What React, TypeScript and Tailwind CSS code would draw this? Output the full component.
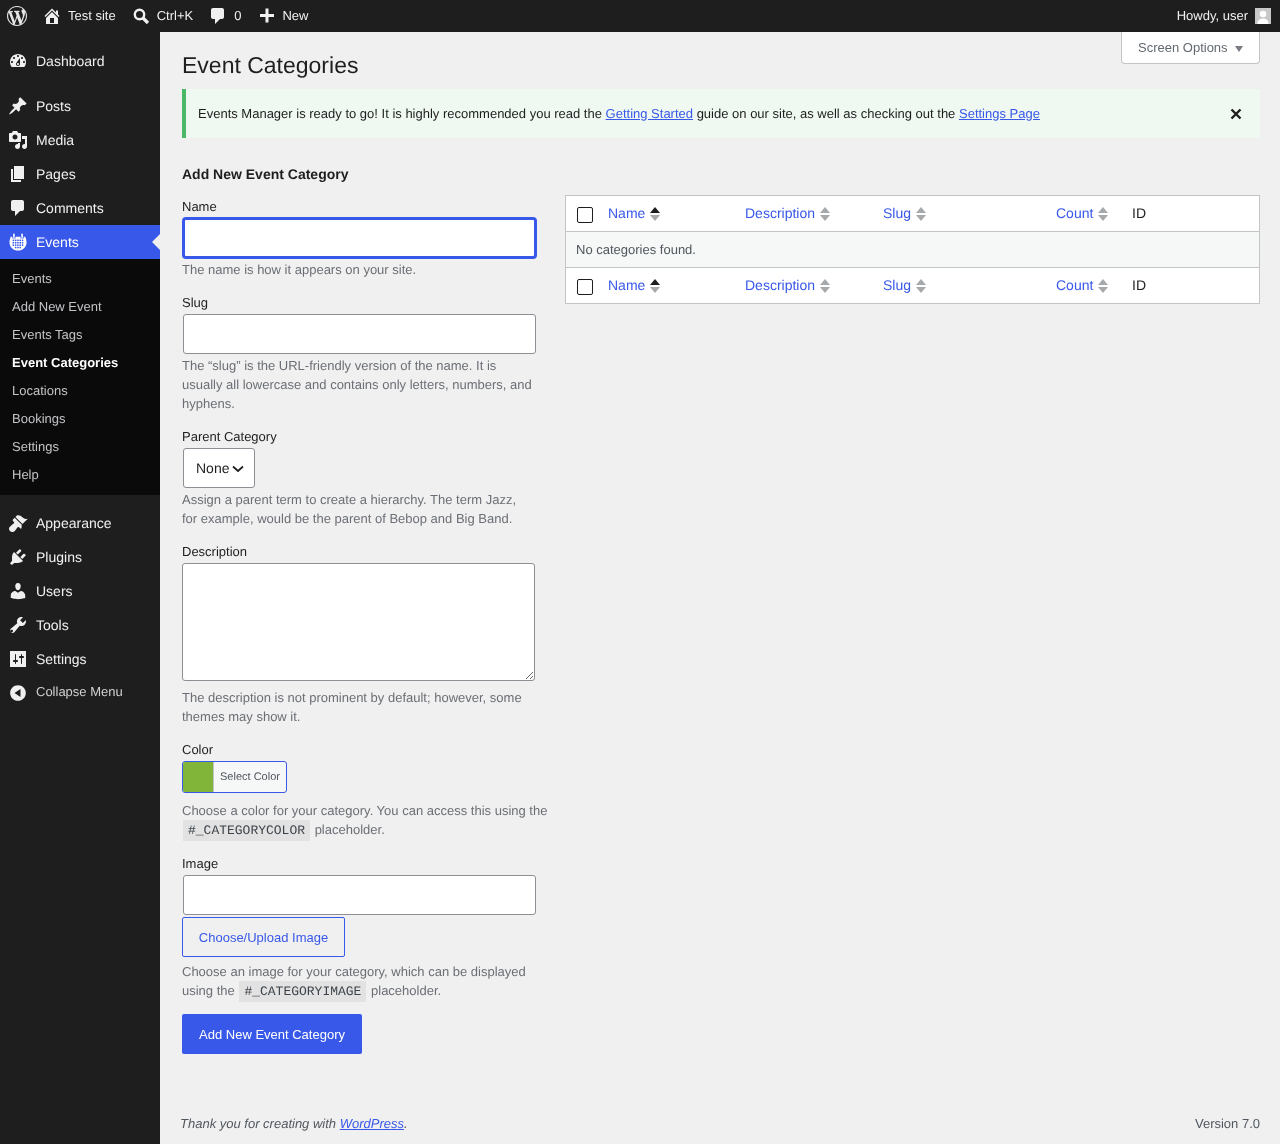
import React from "react";

const paths: Record<string, string> = {
  wp: "M20 10c0-5.510-4.490-10-10-10C4.480 0 0 4.490 0 10c0 5.520 4.480 10 10 10 5.510 0 10-4.480 10-10zM7.780 15.370L4.370 6.220c.55-.02 1.170-.08 1.170-.08.5-.06.44-1.130-.06-1.110 0 0-1.450.11-2.370.11-.18 0-.37 0-.58-.01C4.120 2.690 6.870 1.110 10 1.110c2.330 0 4.450.87 6.050 2.340-.68-.11-1.650.39-1.650 1.580 0 .74.45 1.360.9 2.100.35.61.55 1.360.55 2.460 0 1.490-1.400 5-1.400 5l-3.030-8.370c.54-.02.82-.17.82-.17.5-.05.44-1.250-.06-1.220 0 0-1.440.12-2.380.12-.87 0-2.330-.12-2.330-.12-.5-.03-.56 1.200-.06 1.220l.92.08 1.260 3.410zM17.410 10c.24-.64.74-1.870.43-4.250.7 1.290 1.050 2.710 1.050 4.250 0 3.290-1.730 6.240-4.400 7.780.97-2.590 1.940-5.200 2.920-7.780zM6.100 18.090C3.120 16.650 1.110 13.530 1.110 10c0-1.300.23-2.480.72-3.590C3.250 10.300 4.670 14.200 6.100 18.090zm4.030-6.630l2.580 6.980c-.86.290-1.760.45-2.710.45-.79 0-1.570-.11-2.300-.33.81-2.380 1.630-4.740 2.430-7.100z",
  home: "M16 8.500l1.530 1.530-1.060 1.060L10 4.620l-6.470 6.470-1.060-1.060L10 2.500l4 4v-2h2v4zm-6-2.460l6 5.990V18H4v-5.970zM12 17v-5H8v5h4z",
  comment: "M5 2h9c1.100 0 2 .9 2 2v7c0 1.100-.9 2-2 2h-2l-5 5v-5H5c-1.100 0-2-.9-2-2V4c0-1.100.9-2 2-2z",
  plus: "M17 8v3h-5.500v5.500h-3V11H3V8h5.500V2.500h3V8H17z",
  dashboard: "M3.760 16h12.480c1.100-1.370 1.760-3.110 1.760-5 0-4.420-3.580-8-8-8s-8 3.580-8 8c0 1.890.66 3.630 1.760 5zM10 4c.55 0 1 .45 1 1s-.45 1-1 1-1-.45-1-1 .45-1 1-1zM6 6c.55 0 1 .45 1 1s-.45 1-1 1-1-.45-1-1 .45-1 1-1zm8 0c.55 0 1 .45 1 1s-.45 1-1 1-1-.45-1-1 .45-1 1-1zm-5.370 5.550L12 7v6c0 1.100-.9 2-2 2s-2-.9-2-2c0-.57.24-1.080.63-1.450zM4 10c.55 0 1 .45 1 1s-.45 1-1 1-1-.45-1-1 .45-1 1-1zm12 0c.55 0 1 .45 1 1s-.45 1-1 1-1-.45-1-1 .45-1 1-1zm-5 3c0-.55-.45-1-1-1s-1 .45-1 1 .45 1 1 1 1-.45 1-1z",
  pin: "M10.440 3.020l1.820-1.820 6.360 6.350-1.830 1.820c-1.050-.68-2.480-.57-3.410.36l-.75.75c-.92.93-1.040 2.350-.35 3.410l-1.830 1.820-2.410-2.410-2.800 2.790c-.42.42-3.380 2.710-3.800 2.290s1.860-3.390 2.280-3.810l2.790-2.790L4.100 9.360l1.830-1.820c1.050.69 2.480.57 3.400-.36l.75-.75c.93-.92 1.050-2.350.36-3.410z",
  media: "M13 11V4c0-.55-.45-1-1-1h-1.670L9 1H5L3.670 3H2c-.55 0-1 .45-1 1v7c0 .55.45 1 1 1h10c.55 0 1-.45 1-1zM7 4.500c1.380 0 2.500 1.120 2.500 2.500S8.380 9.500 7 9.500 4.500 8.380 4.500 7 5.620 4.500 7 4.500zM14 6h5v10.500c0 1.380-1.120 2.500-2.500 2.500S14 17.880 14 16.500s1.120-2.500 2.500-2.500c.17 0 .34.020.5.050V9h-3V6zm-4 8.050V13h2v3.500c0 1.380-1.120 2.500-2.500 2.500S7 17.880 7 16.500 8.120 14 9.500 14c.17 0 .34.020.5.050z",
  page: "M6 15V2h10v13H6zm-1 1h8v2H3V5h2v11z",
  brush: "M14.480 11.060L7.410 3.990l1.500-1.500c.5-.56 2.300-.47 3.510.32 1.210.8 1.430 1.280 2.910 2.100 1.180.64 2.450 1.260 4.450.85zm-.71.71L6.700 4.700 4.930 6.470c-.39.39-.39 1.020 0 1.410l1.060 1.060c.39.39.39 1.030 0 1.420-.6.6-1.430 1.110-2.210 1.690-.35.26-.7.53-1.010.84C1.430 13.710 1 14.650 1 15.650 1 17.500 2.500 19 4.350 19c.99 0 1.940-.43 2.780-1.470.31-.31.58-.66.84-1.010.58-.78 1.090-1.610 1.690-2.210.39-.39 1.020-.39 1.410 0l1.060 1.060c.39.39 1.030.39 1.420 0z",
  plugin: "M13.110 4.360L9.870 7.600 8 5.730l3.240-3.240c.35-.34 1.050-.2 1.560.32.52.51.66 1.210.31 1.550zm-8 1.770l.91-1.120 9.010 9.010-1.190.84c-.71.71-2.630 1.160-3.820 1.160H6.140L4.900 17.260c-.59.59-1.540.59-2.120 0-.59-.58-.59-1.530 0-2.120l1.240-1.240v-3.880c0-1.130.4-3.130 1.090-3.890zm7.260 3.970l3.240-3.240c.34-.35 1.040-.21 1.550.31.52.51.66 1.210.31 1.550l-3.240 3.250z",
  users: "M10 9.250c-2.270 0-2.730-3.440-2.730-3.440C7 4.020 7.820 2 9.970 2c2.160 0 2.980 2.020 2.710 3.810 0 0-.41 3.440-2.680 3.440zm0 2.570L12.720 10c2.390 0 4.520 2.330 4.520 4.530v2.490s-3.650 1.130-7.240 1.130c-3.650 0-7.240-1.130-7.240-1.130v-2.490c0-2.250 1.940-4.480 4.470-4.480z",
  tools: "M16.680 9.770c-1.340 1.340-3.300 1.670-4.950.99l-5.410 6.520c-.99.99-2.590.99-3.570 0-.99-.98-.99-2.580 0-3.570l6.520-5.420c-.68-1.650-.35-3.610.99-4.950 1.280-1.280 3.120-1.620 4.720-1.060l-2.890 2.890 2.820 2.820 2.860-2.870c.53 1.580.18 3.390-1.090 4.650zM4.600 17.030c.55-.55.55-1.440 0-1.990-.55-.55-1.440-.55-1.990 0-.55.55-.55 1.440 0 1.990.55.55 1.440.55 1.990 0z",
  settings: "M18 16V2H2v16h16zM8 11h1c.55 0 1 .45 1 1s-.45 1-1 1H8v1.500c0 .28-.22.5-.5.5s-.5-.22-.5-.5V13H6c-.55 0-1-.45-1-1s.45-1 1-1h1V5.500c0-.28.22-.5.5-.5s.5.22.5.5V11zm5-2h-1c-.55 0-1-.45-1-1s.45-1 1-1h1V5.500c0-.28.22-.5.5-.5s.5.22.5.5V7h1c.55 0 1 .45 1 1s-.45 1-1 1h-1v5.500c0 .28-.22.5-.5.5s-.5-.22-.5-.5V9z",
  collapse: "M10 2.160c4.330 0 7.840 3.510 7.840 7.840s-3.510 7.840-7.840 7.840S2.160 14.330 2.160 10 5.670 2.160 10 2.160zM12.500 14V6l-6 4z",
};

function Dash({ name, className }: { name: string; className: string }) {
  return (
    <svg viewBox="0 0 20 20" className={className} fill="currentColor" fillRule="evenodd">
      <path d={paths[name]} />
    </svg>
  );
}

function EventsIcon() {
  const dots: React.ReactNode[] = [];
  for (let r = 0; r < 4; r++) {
    for (let c = 0; c < 5; c++) {
      if (r === 3 && (c === 0 || c === 4)) continue;
      dots.push(<rect key={r + "-" + c} x={4.6 + c * 2.3} y={7.6 + r * 2.4} width="1.5" height="1.5" fill="#3858e9" />);
    }
  }
  return (
    <svg viewBox="0 0 20 20" className="w-[20px] h-[20px] shrink-0 text-white" fill="currentColor">
      <path d="M2.800 4.800H17.200c.9 1.800 1.300 3.800 1.300 5.900 0 4.200-3.700 7.800-8.500 7.800S1.500 14.900 1.500 10.700c0-2.100.4-4.100 1.300-5.900z" />
      <rect x="4.300" y="3" width="3.200" height="3.400" fill="#3858e9" />
      <rect x="12.500" y="3" width="3.200" height="3.400" fill="#3858e9" />
      <rect x="5.100" y="1.400" width="1.600" height="4.600" rx=".8" />
      <rect x="13.300" y="1.400" width="1.600" height="4.600" rx=".8" />
      {dots}
    </svg>
  );
}

function MenuItem({ icon, label, active, custom }: { icon?: string; label: string; active?: boolean; custom?: React.ReactNode }) {
  return (
    <a className={"relative flex items-center h-[34px] pl-[8px] text-[14px] " + (active ? "bg-[#3858e9] text-white" : "text-[#f0f0f0]")}>
      {custom ?? <Dash name={icon as string} className={"w-[20px] h-[20px] shrink-0 " + (active ? "text-white" : "text-[#f0f0f0]")} />}
      <span className="ml-[8px]">{label}</span>
      {active ? <span className="absolute right-0 top-[9px] w-0 h-0 border-y-[8px] border-y-transparent border-r-[8px] border-r-[#f0f0f0]" /> : null}
    </a>
  );
}

function SubItem({ label, current }: { label: string; current?: boolean }) {
  return (
    <a className={"flex items-center h-[28px] pl-[12px] text-[13px] " + (current ? "font-bold text-white" : "text-[#c3c4c7]")}>{label}</a>
  );
}

function Sorter({ active }: { active?: boolean }) {
  return (
    <span className="flex flex-col gap-[2px] ml-[5px]">
      <span className={"w-0 h-0 border-x-[5px] border-x-transparent border-b-[6px] " + (active ? "border-b-[#1e1e1e]" : "border-b-[#a7aaad]")} />
      <span className="w-0 h-0 border-x-[5px] border-x-transparent border-t-[6px] border-t-[#a7aaad]" />
    </span>
  );
}

function HeaderRow({ cls }: { cls: string }) {
  const cols: [string, string, boolean?][] = [
    ["Name", "w-[137px]", true],
    ["Description", "w-[138px]"],
    ["Slug", "w-[173px]"],
    ["Count", "w-[76px]"],
  ];
  return (
    <div className={"flex items-center bg-white " + cls}>
      <div className="w-[32px] shrink-0 pl-[11px] pt-[2px] flex">
        <input type="checkbox" className="appearance-none block w-[16px] h-[16px] bg-white border border-[#1e1e1e] rounded-[2px]" />
      </div>
      {cols.map(([t, w, a]) => (
        <div key={t} className={"flex items-center pl-[10px] shrink-0 " + w}>
          <a className="text-[14px] text-[#3858e9]">{t}</a>
          <Sorter active={a} />
        </div>
      ))}
      <div className="pl-[10px] text-[14px] text-[#1e1e1e]">ID</div>
    </div>
  );
}

const labelCls = "block text-[13px] leading-[19px] text-[#1e1e1e]";
const hintCls = "text-[13px] leading-[19px] text-[#6b6f75]";
const inputCls = "block ml-px w-[353px] h-[40px] bg-white border border-[#8c8f94] rounded-[3px]";
const codeCls = "bg-[#e2e2e2] text-[#3c434a] px-[5px] py-[3px] mx-[1px] text-[13px] font-['Liberation_Mono',monospace]";

export default function App() {
  return (
    <div className="h-[1144px] flex flex-col bg-[#f0f0f0] font-['Liberation_Sans',Arial,sans-serif] overflow-hidden [text-rendering:geometricPrecision] [will-change:transform]">
      <header className="h-[32px] shrink-0 bg-[#1e1e1e] text-[#f0f0f0] text-[13px] flex items-center justify-between">
        <div className="flex items-center">
          <Dash name="wp" className="w-[20px] h-[20px] ml-[7px] text-[#e6e6e6]" />
          <div className="flex items-center ml-[15px]">
            <Dash name="home" className="w-[20px] h-[20px]" />
            <span className="ml-[6px]">Test site</span>
          </div>
          <div className="flex items-center ml-[15px]">
            <svg viewBox="0 0 20 20" className="w-[20px] h-[20px]" fill="none" stroke="currentColor">
              <circle cx="8.500" cy="8.500" r="4.700" strokeWidth="2.400" />
              <path d="M12 12l5 5" strokeWidth="3.200" />
            </svg>
            <span className="ml-[6px]">Ctrl+K</span>
          </div>
          <div className="flex items-center ml-[15px]">
            <Dash name="comment" className="w-[20px] h-[20px]" />
            <span className="ml-[6px]">0</span>
          </div>
          <div className="flex items-center ml-[16px]">
            <Dash name="plus" className="w-[20px] h-[20px]" />
            <span className="ml-[5px]">New</span>
          </div>
        </div>
        <div className="flex items-center mr-[9px]">
          <span>Howdy, user</span>
          <span className="ml-[7px] w-[16px] h-[16px] bg-[#c8c8c8] overflow-hidden block">
            <svg viewBox="0 0 16 16" className="w-[16px] h-[16px]">
              <circle cx="8" cy="6" r="3.300" fill="#fff" />
              <path d="M2.500 16c0-4 2.500-5.500 5.500-5.500s5.500 1.500 5.500 5.500z" fill="#fff" />
            </svg>
          </span>
        </div>
      </header>

      <div className="flex flex-1 min-h-0">
        <nav className="w-[160px] shrink-0 bg-[#1e1e1e] pt-[12px]">
          <MenuItem icon="dashboard" label="Dashboard" />
          <div className="h-[11px]" />
          <MenuItem icon="pin" label="Posts" />
          <MenuItem icon="media" label="Media" />
          <MenuItem icon="page" label="Pages" />
          <MenuItem icon="comment" label="Comments" />
          <MenuItem label="Events" active custom={<EventsIcon />} />
          <div className="bg-[#0a0a0a] pt-[6px] pb-[6px]">
            <SubItem label="Events" />
            <SubItem label="Add New Event" />
            <SubItem label="Events Tags" />
            <SubItem label="Event Categories" current />
            <SubItem label="Locations" />
            <SubItem label="Bookings" />
            <SubItem label="Settings" />
            <SubItem label="Help" />
          </div>
          <div className="h-[11px]" />
          <MenuItem icon="brush" label="Appearance" />
          <MenuItem icon="plugin" label="Plugins" />
          <MenuItem icon="users" label="Users" />
          <MenuItem icon="tools" label="Tools" />
          <MenuItem icon="settings" label="Settings" />
          <div className="flex items-center h-[32px] pl-[8px] text-[13px] text-[#d0d0d0]">
            <Dash name="collapse" className="w-[20px] h-[20px] shrink-0 text-[#f0f0f0] mt-[1px]" />
            <span className="ml-[8px] -mt-[1px]">Collapse Menu</span>
          </div>
        </nav>

        <main className="flex-1 min-w-0 flex flex-col pl-[22px] pr-[20px] text-[#1e1e1e]">
          <div className="flex justify-between items-start h-[57px]">
            <h1 className="text-[23px] leading-[29px] pt-[19px] font-normal">Event Categories</h1>
            <button className="flex items-center h-[32px] w-[139px] pl-[16px] bg-white border border-t-0 border-[#c3c4c7] rounded-b-[4px] text-[13px] text-[#646970]">
              Screen Options
              <span className="ml-[7px] mt-[2px] w-0 h-0 border-x-[4px] border-x-transparent border-t-[6px] border-t-[#787c82]" />
            </button>
          </div>

          <div className="flex items-center justify-between h-[49px] bg-[#eff9f1] border-l-[4px] border-[#4ab866] pl-[12px] pr-[18px] text-[13px]">
            <p>
              Events Manager is ready to go! It is highly recommended you read the{" "}
              <a className="text-[#3858e9] underline">Getting Started</a> guide on our site, as well as checking out the{" "}
              <a className="text-[#3858e9] underline">Settings Page</a>
            </p>
            <svg viewBox="0 0 12 12" className="w-[12px] h-[12px]" fill="none" stroke="#1e1e1e" strokeWidth="2.400">
              <path d="M1.500 1.500l9 9M10.500 1.500l-9 9" />
            </svg>
          </div>

          <div className="flex mt-[19px]">
            <div className="w-[383px] shrink-0">
              <h2 className="text-[14px] leading-[34px] font-bold mb-[6px]">Add New Event Category</h2>

              <label className={labelCls}>Name</label>
              <input className="block mt-[2px] ml-px w-[353px] h-[40px] bg-white border-2 border-[#3858e9] rounded-[3px] ring-1 ring-[#3858e9] my-[1px]" />
              <p className={hintCls + " mt-[2px] w-[353px]"}>The name is how it appears on your site.</p>

              <label className={labelCls + " mt-[14px]"}>Slug</label>
              <input className={inputCls + " mt-[2px]"} />
              <p className={hintCls + " mt-[2px] w-[353px]"}>
                The “slug” is the URL-friendly version of the name. It is usually all lowercase and contains only letters, numbers, and hyphens.
              </p>

              <label className={labelCls + " mt-[14px]"}>Parent Category</label>
              <div className="flex items-center ml-px mt-[2px] w-[72px] h-[40px] bg-white border border-[#8c8f94] rounded-[3px] pl-[12px] text-[14px]">
                None
                <svg viewBox="0 0 12 8" className="w-[12px] h-[8px] ml-[3px] mt-[1px]" fill="none" stroke="#1e1e1e" strokeWidth="1.700">
                  <path d="M1 1.500l5 4.500 5-4.500" />
                </svg>
              </div>
              <p className={hintCls + " mt-[2px] w-[345px]"}>
                Assign a parent term to create a hierarchy. The term Jazz, for example, would be the parent of Bebop and Big Band.
              </p>

              <label className={labelCls + " mt-[14px]"}>Description</label>
              <textarea className="block mt-[2px] w-[353px] h-[118px] bg-white border border-[#8c8f94] rounded-[3px]" />
              <p className={hintCls + " mt-[7px] w-[353px]"}>The description is not prominent by default; however, some themes may show it.</p>

              <label className={labelCls + " mt-[14px]"}>Color</label>
              <div className="flex mt-[2px] w-[105px] h-[32px] border border-[#3858e9] rounded-[3px] overflow-hidden bg-[#f6f7f7]">
                <span className="w-[31px] bg-[#81b53a] border-r border-[#c3c4c7]" />
                <span className="flex-1 flex items-center pl-[6px] pt-[1px] text-[11px] text-[#50575e]">Select Color</span>
              </div>
              <p className={hintCls + " mt-[8px]"}>
                Choose a color for your category. You can access this using the<br />
                <code className={codeCls}>#_CATEGORYCOLOR</code> placeholder.
              </p>

              <label className={labelCls + " mt-[14px]"}>Image</label>
              <input className={inputCls + " mt-[2px]"} />
              <button className="flex items-center mt-[2px] h-[40px] w-[163px] pt-[1px] justify-center border border-[#3858e9] rounded-[2px] text-[13px] text-[#3858e9]">
                Choose/Upload Image
              </button>
              <p className={hintCls + " mt-[5px]"}>
                Choose an image for your category, which can be displayed<br />
                using the <code className={codeCls}>#_CATEGORYIMAGE</code> placeholder.
              </p>

              <button className="mt-[13px] flex items-center justify-center h-[40px] w-[180px] pt-[1px] bg-[#3858e9] rounded-[2px] text-[13px] text-white">
                Add New Event Category
              </button>
            </div>

            <div className="flex-1 mt-[38px]">
              <div className="border border-[#c3c4c7]">
                <HeaderRow cls="h-[36px] border-b border-[#c3c4c7]" />
                <div className="h-[36px] flex items-center pl-[10px] bg-[#f6f7f7] border-b border-[#c3c4c7] text-[13px] text-[#50575e]">
                  No categories found.
                </div>
                <HeaderRow cls="h-[35px]" />
              </div>
            </div>
          </div>

          <footer className="mt-auto h-[30px] flex items-start justify-between -ml-[2px] text-[13px] text-[#50575e]">
            <span className="italic">
              Thank you for creating with <a className="text-[#3858e9] underline">WordPress</a>.
            </span>
            <span>Version 7.0</span>
          </footer>
        </main>
      </div>
    </div>
  );
}
